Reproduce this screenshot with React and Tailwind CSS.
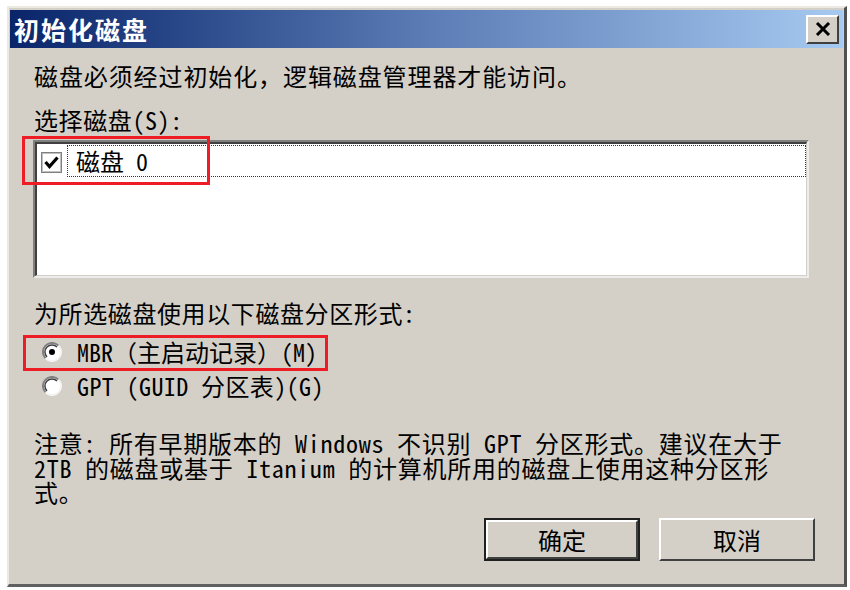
import React from "react";

const FONT = { fontFamily: '"Noto Sans Mono CJK SC","Noto Sans CJK SC","Liberation Mono",monospace' };

function Check() {
  return (
    <svg width="21" height="21" viewBox="0 0 21 21" className="shrink-0">
      <rect x="0.5" y="0.5" width="20" height="20" fill="#fff" stroke="#808080" />
      <rect x="1.5" y="1.5" width="18" height="18" fill="none" stroke="#c0c0c0" />
      <path d="M4.5 10 L8.5 14.5 L16.5 5.5" fill="none" stroke="#000" strokeWidth="3.2" />
    </svg>
  );
}

function Radio({ on }) {
  return (
    <svg width="20" height="20" viewBox="0 0 20 20" className="shrink-0">
      <circle cx="10" cy="10" r="9" fill="#fff" />
      <path d="M3.6 16.4 A9 9 0 0 1 16.4 3.6" fill="none" stroke="#808080" strokeWidth="2" />
      <path d="M5 15 A7 7 0 0 1 15 5" fill="none" stroke="#404040" strokeWidth="1.5" />
      <path d="M16.4 3.6 A9 9 0 0 1 3.6 16.4" fill="none" stroke="#f4f4f4" strokeWidth="2" />
      {on && <circle cx="10" cy="10" r="3" fill="#000" />}
    </svg>
  );
}

function Btn({ children, def }) {
  return (
    <div className={`w-[156px] h-[43px] ${def ? "border-2 border-[#202020]" : ""}`}>
      <div className="w-full h-full flex items-center justify-center text-[24px] text-black bg-[#d4d0c8] border-t-2 border-l-2 border-t-white border-l-white border-r-2 border-b-2 border-r-[#404040] border-b-[#404040]">
        {children}
      </div>
    </div>
  );
}

export default function App() {
  return (
    <div className="w-[850px] h-[590px] bg-white relative overflow-hidden" style={FONT}>
      <div className="absolute left-[7px] top-[6px] w-[840px] h-[581px] bg-[#d4d0c8] border-t-2 border-l-2 border-t-[#ece9e2] border-l-[#ece9e2] border-r-[3px] border-b-[3px] border-r-[#505050] border-b-[#606060] pl-[1px] pt-[2px] pr-[1px] flex flex-col">
        {/* title bar */}
        <div className="h-[38px] flex items-center justify-between bg-gradient-to-r from-[#0a246a] via-[#5b7cb5] to-[#a6caf0] pl-[4px] pr-[4px]">
          <span className="text-white font-bold text-[25px] leading-none tracking-[2px]">初始化磁盘</span>
          <div className="w-[33px] h-[29px] bg-[#d4d0c8] border-t-2 border-l-2 border-t-white border-l-white border-r-2 border-b-2 border-r-[#404040] border-b-[#404040] flex items-center justify-center">
            <svg width="16" height="14" viewBox="0 0 16 14">
              <path d="M2 1 L14 13 M14 1 L2 13" stroke="#000" strokeWidth="3" />
            </svg>
          </div>
        </div>

        {/* body */}
        <div className="flex flex-col pl-[24px] text-black text-[24px]">
          <div className="mt-[14px] h-[28px] leading-[28px] whitespace-nowrap tracking-[0.9px]">磁盘必须经过初始化，逻辑磁盘管理器才能访问。</div>
          <div className="mt-[16px] h-[28px] leading-[28px] whitespace-nowrap tracking-[0.6px]">选择磁盘(S):</div>

          {/* listbox */}
          <div className="mt-[6px] -ml-[1px] w-[776px] h-[138px] bg-white border-t-2 border-l-2 border-t-[#808080] border-l-[#808080] border-r-2 border-b-2 border-r-[#ececec] border-b-[#ececec]">
            <div className="w-full h-full border-t-2 border-l-2 border-t-[#404040] border-l-[#404040] border-r border-b border-r-[#d4d0c8] border-b-[#d4d0c8] pl-[4px] pt-[1px]">
              <div className="flex items-center h-[32px]">
                <div className="mt-[2px]"><Check /></div>
                <div className="ml-[5px] flex-1 h-[32px] border border-dotted border-[#333] flex items-center pl-[8px] leading-none whitespace-nowrap">磁盘 0</div>
              </div>
            </div>
          </div>

          <div className="mt-[21px] h-[28px] leading-[28px] whitespace-nowrap tracking-[0.6px]">为所选磁盘使用以下磁盘分区形式:</div>
          <div className="mt-[11px] h-[28px] flex items-center ml-[8px] whitespace-nowrap">
            <Radio on />
            <span className="ml-[15px] leading-none">MBR（主启动记录）(M)</span>
          </div>
          <div className="mt-[6px] h-[28px] flex items-center ml-[8px] whitespace-nowrap">
            <Radio />
            <span className="ml-[15px] leading-none tracking-[0.4px]">GPT (GUID 分区表)(G)</span>
          </div>

          <div className="mt-[31px] leading-[24.5px] text-[24px] tracking-[0.75px] whitespace-nowrap">
            <div className="h-[24.5px]">注意: 所有早期版本的 Windows 不识别 GPT 分区形式。建议在大于</div>
            <div className="h-[24.5px]">2TB 的磁盘或基于 Itanium 的计算机所用的磁盘上使用这种分区形</div>
            <div className="h-[24.5px]">式。</div>
          </div>
        </div>

        <div className="absolute left-[475px] top-[510px] flex gap-[19px]">
          <Btn def>确定</Btn>
          <Btn>取消</Btn>
        </div>
      </div>

      {/* red annotation boxes */}
      <div className="absolute left-[22px] top-[136px] w-[188px] h-[49px] border-[3px] border-[#ee1c24]" />
      <div className="absolute left-[23px] top-[335px] w-[305px] h-[36px] border-[3px] border-[#ee1c24]" />
    </div>
  );
}
